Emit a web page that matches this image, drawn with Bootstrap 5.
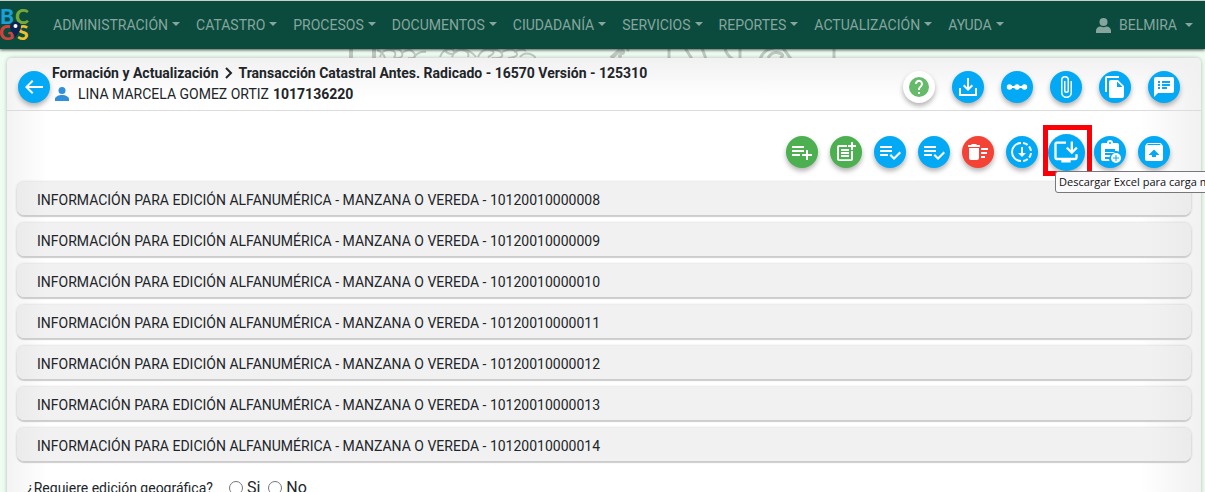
<!DOCTYPE html>
<html lang="es">
<head>
<meta charset="utf-8">
<meta name="viewport" content="width=device-width, initial-scale=1">
<title>Formación y Actualización</title>
<link href="https://cdn.jsdelivr.net/npm/bootstrap@5.3.0/dist/css/bootstrap.min.css" rel="stylesheet">
<script src="https://cdn.jsdelivr.net/npm/bootstrap@5.3.0/dist/js/bootstrap.bundle.min.js" defer></script>
<style>
body{font-family:Roboto,"Liberation Sans",sans-serif;font-size:14px;line-height:20px;background:#effcf1;color:#212529;overflow:hidden;height:100vh}
.topbar{background:#0b4b3d;border-top:1px solid #c8cfcc;height:49px;padding:0;box-shadow:0 1px 3px rgba(0,0,0,.7);z-index:3}
.topbar .nav-link{color:#86a59e;padding:8px}
.topbar .dropdown-toggle::after{margin-left:4px;vertical-align:4px;border-width:4px 4px 0}
.topbar .user-link::after{margin-left:8px}
.logo{width:32px;height:40px}
.logo text{font-family:Lato,sans-serif;font-weight:900;font-size:21px}
.menu{margin-left:13px}
.watermark{position:absolute;top:48px;left:0;width:840px;height:12px}
.panel{position:relative;margin:9px 4px 0 7px;min-height:500px;border-radius:5px;background:linear-gradient(to right,#f3f3f3,rgba(255,255,255,0) 40px calc(100% - 60px),#f1f1f1),linear-gradient(#f1f1f1,#fff 40px);box-shadow:0 0 4px rgba(0,0,0,.25)}
.panel-top{height:53px;border-bottom:1px solid #dcdcdc;padding:6px 21px 0 11px}
.round{width:32px;height:32px;border-radius:50%;border:0;padding:0;background:#03a9f4;color:#fff;display:flex;align-items:center;justify-content:center;box-shadow:0 3px 5px rgba(0,0,0,.3);flex:none}
.round svg{width:24px;height:24px;fill:currentColor}
.round.green{background:#4caf50}
.round.red{background:#f44336}
.round.help{background:#fff;color:#66bb6a}
.round.big{width:37px;height:37px}
.round.big svg{width:28px;height:28px}
.titles{margin-left:2px;margin-bottom:6px}
.titles .owner{line-height:22px}
.titles svg.person{width:18px;height:18px;fill:#2f8fd8}
.head-actions{gap:17px}
.tools{gap:12px;height:52px;margin-top:15px;padding-right:31px}
.spot{position:relative;width:32px;height:32px;display:flex;align-items:center;justify-content:center}
.spot-frame{position:absolute;inset:-11px -10px -8px -7px;border:5px solid #fb0007;pointer-events:none}
.hint{position:absolute;left:5px;top:35px;height:22px;padding:0 3px;border:1px solid #77777c;border-radius:3px;background:#fbfbfd;color:#111;font:11px/20px "Open Sans",sans-serif;white-space:nowrap;z-index:2}
.blocks{gap:8px;padding:0 10px;margin-top:4px}
.block-row{height:33px;border:0;border-radius:7px;background:linear-gradient(to right,#ebebeb,#f1f1f1 30px calc(100% - 40px),#ebebeb);box-shadow:0 2px 1px #ccc,0 0 3px rgba(0,0,0,.2);text-align:left;padding:2px 20px 0;color:#212529}
.question{padding:17px 20px 0}
.question input{width:14px;height:14px;margin:0}
.question .opt{font-size:16px}
</style>
</head>
<body>
<nav class="topbar navbar navbar-expand position-relative">
<a href="#" class="logo d-block" aria-label="BCGS"><svg width="32" height="40" viewBox="0 0 32 40"><text x="0" y="19" fill="#18a0dc">B</text><text x="15" y="19" fill="#76a83a">C</text><text x="-1" y="35" fill="#d3433d">G</text><text x="17" y="35" fill="#edc02c">S</text><path d="M15.500 33C14 28 10 26 10 22a5.500 5.500 0 0 1 11 0c0 4-4 6-5.500 11z" fill="#0b2355"/><circle cx="15.500" cy="21" r="2" fill="#fff"/></svg></a>
<ul class="navbar-nav menu">
<li><a class="nav-link dropdown-toggle" href="#">ADMINISTRACIÓN</a></li>
<li><a class="nav-link dropdown-toggle" href="#">CATASTRO</a></li>
<li><a class="nav-link dropdown-toggle" href="#">PROCESOS</a></li>
<li><a class="nav-link dropdown-toggle" href="#">DOCUMENTOS</a></li>
<li><a class="nav-link dropdown-toggle" href="#">CIUDADANÍA</a></li>
<li><a class="nav-link dropdown-toggle" href="#">SERVICIOS</a></li>
<li><a class="nav-link dropdown-toggle" href="#">REPORTES</a></li>
<li><a class="nav-link dropdown-toggle" href="#">ACTUALIZACIÓN</a></li>
<li><a class="nav-link dropdown-toggle" href="#">AYUDA</a></li>
</ul>
<a class="nav-link dropdown-toggle user-link ms-auto me-1 d-flex align-items-center" href="#"><svg class="me-2" width="15" height="15" viewBox="0 0 15 15" fill="#86a59e"><circle cx="7.500" cy="4" r="4"/><path d="M0 15v-2c0-3 2-4.500 4.500-4.500 2 1 4 1 6 0C13 8.500 15 10 15 13v2z"/></svg>BELMIRA</a>
</nav>
<svg class="watermark" viewBox="0 0 840 12" fill="none" stroke="#c0cbc2" stroke-width="2"><path d="M351 0v12M374 0v12" stroke-width="4"/><path d="M377 2q6 2 8 8M380 9q2-8 10-7t4 8M390 2q10-3 12 3t-8 5M402 5q8-6 12 0t-6 5M414 9q5-6 12-5M440 9q3-8 10-8t2 8M444 2q8 8 14 0M452 9q2-8 10-7t6 7M462 2q8-1 14 7M478 9q4-9 12-7t-2 7M490 2q10-1 12 4t-10 4M502 4q10-5 14 0t-8 6M514 4q8-4 12-1M520 9q4-5 10-3t5 5"/><path d="M611 10l9-8" stroke-width="4"/><g fill="#c0cbc2" stroke="none"><circle cx="622" cy="4" r="3"/><circle cx="620" cy="8" r="2"/><circle cx="628" cy="2" r="1.500"/></g><path d="M669 0v10M685 0l7 11M702 0l4 11M725 0q1 7 8 11M740 0v10M760 11q4-10 14-11M768 10q4-7 11-5t1 5M783 0l8 11M834 0v10" stroke-width="3"/></svg>
<main class="panel">
<header class="panel-top d-flex align-items-center">
<button class="round" aria-label="Volver"><svg viewBox="0 0 24 24"><path d="M21 11H6.800l4.600-4.600L10 5l-7 7 7 7 1.400-1.400L6.800 13H21z"/></svg></button>
<div class="titles">
<div class="fw-bold d-flex align-items-center">Formación y Actualización<svg width="20" height="14" viewBox="0 0 20 14" fill="none" stroke="#212529" stroke-width="2"><path d="M7 2l5 5-5 5"/></svg>Transacción Catastral Antes. Radicado - 16570 Versión - 125310</div>
<div class="owner d-flex align-items-center"><svg class="person me-2" viewBox="0 0 18 18"><circle cx="10" cy="5.500" r="3.500"/><path d="M3 16v-2c0-2.500 4-4 7-4s7 1.500 7 4v2z"/></svg>LINA MARCELA GOMEZ ORTIZ <strong class="ms-1">1017136220</strong></div>
</div>
<div class="head-actions d-flex ms-auto">
<button class="round help" aria-label="Ayuda"><svg viewBox="0 0 24 24"><path d="M12 2a10 10 0 1 0 0 20 10 10 0 0 0 0-20zm1 17h-2v-2h2zm2.100-7.700l-.9.900C13.400 12.900 13 13.500 13 15h-2v-.5c0-1.100.4-2.100 1.200-2.800l1.200-1.300A2 2 0 1 0 10 9H8a4 4 0 1 1 7.100 2.300z"/></svg></button>
<button class="round" aria-label="Descargar"><svg viewBox="0 0 24 24"><path d="M19 13v6H5v-6H3v8h18v-8zM11 3v9.200L8.400 9.600 7 11l5 5 5-5-1.400-1.400-2.600 2.600V3z"/></svg></button>
<button class="round" aria-label="Línea de tiempo"><svg viewBox="0 0 24 24"><path d="M4 11h16v2H4z"/><circle cx="4.500" cy="12" r="2.700"/><circle cx="12" cy="12" r="2.700"/><circle cx="19.500" cy="12" r="2.700"/></svg></button>
<button class="round" aria-label="Adjuntos"><svg viewBox="0 0 24 24"><path d="M16.500 6v11.500a4 4 0 0 1-8 0V5a2.500 2.500 0 0 1 5 0v10.500a1 1 0 0 1-2 0V6H10v9.500a2.500 2.500 0 0 0 5 0V5a4 4 0 0 0-8 0v12.500a5.500 5.500 0 0 0 11 0V6z"/></svg></button>
<button class="round" aria-label="Copiar"><svg viewBox="0 0 24 24"><path d="M16 1H4a2 2 0 0 0-2 2v14h2V3h12zm-1 4l6 6v10a2 2 0 0 1-2 2H8a2 2 0 0 1-2-2V7c0-1.100.9-2 2-2zm-1 7h5.500L14 6.500z"/></svg></button>
<button class="round" aria-label="Comentarios"><svg viewBox="0 0 24 24"><path d="M20 2H4a2 2 0 0 0-2 2v18l4-4h14a2 2 0 0 0 2-2V4a2 2 0 0 0-2-2zM8 14H6v-2h2zm0-3H6V9h2zm0-3H6V6h2zm7 6h-5v-2h5zm3-3h-8V9h8zm0-3h-8V6h8z"/></svg></button>
</div>
</header>
<div class="tools d-flex justify-content-end align-items-center">
<button class="round green" aria-label="Agregar a la lista"><svg viewBox="0 0 24 24"><path d="M14 10H2v2h12zm0-4H2v2h12zm4 8v-4h-2v4h-4v2h4v4h2v-4h4v-2zM2 16h8v-2H2z"/></svg></button>
<button class="round green" aria-label="Nueva nota"><svg viewBox="0 0 24 24"><path d="M17 19.200H5V7h8V5H5a2 2 0 0 0-2 2v12c0 1.100.9 2 2 2h12a2 2 0 0 0 2-2v-8h-2zM19 2h-2v3h-3v2h3v3h2V7h3V5h-3zM7 9h8v2H7zM7 12v2h8v-2zM7 15h8v2H7z"/></svg></button>
<button class="round" aria-label="Verificar"><svg viewBox="0 0 24 24"><path d="M14 10H2v2h12zm0-4H2v2h12zM2 16h8v-2H2zm19.500-4.500L23 13l-7 7-4.500-4.500L13 14l3 3z"/></svg></button>
<button class="round" aria-label="Verificar todo"><svg viewBox="0 0 24 24"><path d="M14 10H2v2h12zm0-4H2v2h12zM2 16h8v-2H2zm19.500-4.500L23 13l-7 7-4.500-4.500L13 14l3 3z"/></svg></button>
<button class="round red" aria-label="Eliminar"><svg viewBox="0 0 24 24"><path d="M15 16h4v2h-4zm0-8h7v2h-7zm0 4h6v2h-6zM3 18c0 1.100.9 2 2 2h6a2 2 0 0 0 2-2V8H3zM14 5h-3l-1-1H6L5 5H2v2h12z"/></svg></button>
<button class="round" aria-label="Descargar avance"><svg viewBox="0 0 24 24"><g fill="none" stroke="currentColor" stroke-width="2"><path d="M11 3a9 9 0 0 0 0 18"/><path d="M13 3a9 9 0 0 1 8 8M21 13a9 9 0 0 1-8 8" stroke-dasharray="5 2"/></g><path d="M11 7v6H8l4 4 4-4h-3V7z"/></svg></button>
<div class="spot">
<button class="round big" aria-label="Descargar Excel para carga masiva" aria-describedby="hint"><svg viewBox="0 0 24 24"><path d="M20 17H4V5h8V3H4a2 2 0 0 0-2 2v12c0 1.100.9 2 2 2h4v2h8v-2h4a2 2 0 0 0 2-2v-3h-2zM17 14l5-5-1.400-1.400L18 10.200V3h-2v7.200l-2.600-2.600L12 9z"/></svg></button>
<span class="spot-frame"></span>
<span class="hint" id="hint" role="tooltip">Descargar Excel para carga masiva</span>
</div>
<button class="round" aria-label="Agregar tarea"><svg viewBox="0 0 24 24"><path fill-rule="evenodd" d="M19 3h-4a3 3 0 0 0-6 0H5a2 2 0 0 0-2 2v14c0 1.100.9 2 2 2h6.500a6.500 6.500 0 0 1-.4-2H7v-2h4.500l1-2H7v-2h8l2-1H7V9h10v2.100a6 6 0 0 1 4 .5V5a2 2 0 0 0-2-2zm-7-1a1 1 0 1 1 0 2 1 1 0 0 1 0-2z"/><path fill-rule="evenodd" d="M18 13a5 5 0 1 0 0 10 5 5 0 0 0 0-10zm3 5.500h-2.500V21h-1v-2.500H15v-1h2.500V15h1v2.500H21z"/></svg></button>
<button class="round" aria-label="Desarchivar"><svg viewBox="0 0 24 24"><path fill-rule="evenodd" d="M20.500 5.200l-1.300-1.700C18.900 3.200 18.500 3 18 3H6c-.5 0-.9.200-1.200.5L3.500 5.200C3.200 5.600 3 6 3 6.500V19c0 1.100.9 2 2 2h14a2 2 0 0 0 2-2V6.500c0-.5-.2-.9-.5-1.300zM12 9.500l5.500 5.500H14v2h-4v-2H6.500zM5.100 5l.8-1h12l.9 1z"/></svg></button>
</div>
<div class="blocks d-flex flex-column">
<button class="block-row">INFORMACIÓN PARA EDICIÓN ALFANUMÉRICA - MANZANA O VEREDA - 10120010000008</button>
<button class="block-row">INFORMACIÓN PARA EDICIÓN ALFANUMÉRICA - MANZANA O VEREDA - 10120010000009</button>
<button class="block-row">INFORMACIÓN PARA EDICIÓN ALFANUMÉRICA - MANZANA O VEREDA - 10120010000010</button>
<button class="block-row">INFORMACIÓN PARA EDICIÓN ALFANUMÉRICA - MANZANA O VEREDA - 10120010000011</button>
<button class="block-row">INFORMACIÓN PARA EDICIÓN ALFANUMÉRICA - MANZANA O VEREDA - 10120010000012</button>
<button class="block-row">INFORMACIÓN PARA EDICIÓN ALFANUMÉRICA - MANZANA O VEREDA - 10120010000013</button>
<button class="block-row">INFORMACIÓN PARA EDICIÓN ALFANUMÉRICA - MANZANA O VEREDA - 10120010000014</button>
</div>
<div class="question d-flex align-items-center" role="radiogroup" aria-labelledby="geo">
<span id="geo" class="me-3">¿Requiere edición geográfica?</span>
<input type="radio" name="geo" id="si"><label class="opt ms-1 me-2" for="si">Si</label>
<input type="radio" name="geo" id="no"><label class="opt ms-1" for="no">No</label>
</div>
</main>
</body>
</html>
